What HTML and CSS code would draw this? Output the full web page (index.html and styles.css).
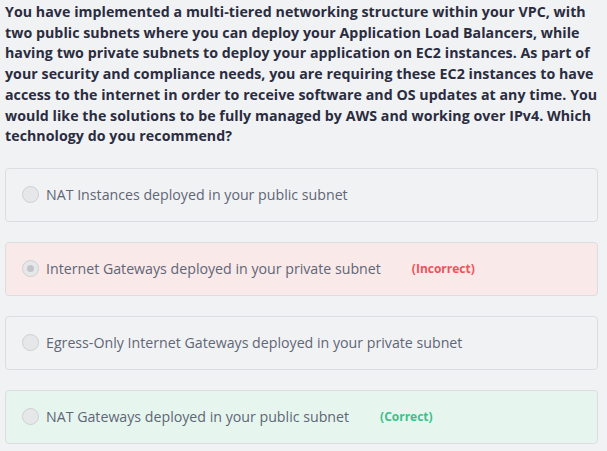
FILE: index.html
```html
<!DOCTYPE html>
<html lang="en">
<head>
<meta charset="utf-8">
<link rel="stylesheet" href="styles.css">
</head>
<body>
<div class="quiz">
  <p class="question">You have implemented a multi-tiered networking structure within your VPC, with two public subnets where you can deploy your Application Load Balancers, while having two private subnets to deploy your application on EC2 instances. As part of your security and compliance needs, you are requiring these EC2 instances to have access to the internet in order to receive software and OS updates at any time. You would like the solutions to be fully managed by AWS and working over IPv4. Which technology do you recommend?</p>
  <div class="options">
    <label class="option">
      <span class="radio"></span>
      <span class="text">NAT Instances deployed in your public subnet</span>
    </label>
    <label class="option incorrect">
      <span class="radio checked"></span>
      <span class="text">Internet Gateways deployed in your private subnet</span>
      <span class="verdict bad">(Incorrect)</span>
    </label>
    <label class="option">
      <span class="radio"></span>
      <span class="text">Egress-Only Internet Gateways deployed in your private subnet</span>
    </label>
    <label class="option correct">
      <span class="radio"></span>
      <span class="text">NAT Gateways deployed in your public subnet</span>
      <span class="verdict good">(Correct)</span>
    </label>
  </div>
</div>
</body>
</html>
```

FILE: styles.css
```css
html, body {
  margin: 0;
  padding: 0;
  background: #f1f2f4;
}
body {
  font-family: "Open Sans", "Noto Sans", sans-serif;
}
.quiz {
  padding: 0 0 0 5px;
}
.question {
  margin: 0;
  padding-top: 2px;
  font-size: 14.2px;
  letter-spacing: 0.05px;
  line-height: 20.7px;
  font-weight: 700;
  color: #2a2c40;
}
.options {
  display: flex;
  flex-direction: column;
  gap: 20px;
  margin: 21px 9px 0 0;
}
.option {
  display: flex;
  align-items: center;
  height: 54px;
  box-sizing: border-box;
  padding-left: 16px;
  border: 1px solid #dcdde0;
  border-radius: 4px;
  background: #f1f2f4;
  font-size: 14.2px;
  color: #5f6676;
}
.option.incorrect {
  background: #f9e9e9;
}
.option.correct {
  background: #e6f6ee;
}
.radio {
  width: 17px;
  height: 17px;
  box-sizing: border-box;
  border: 1px solid #cfd0d3;
  border-radius: 50%;
  background: #e6e7e9;
  margin-right: 7px;
  display: flex;
  align-items: center;
  justify-content: center;
  flex: none;
}
.radio.checked::after {
  content: "";
  width: 7px;
  height: 7px;
  border-radius: 50%;
  background: #c4c5c8;
}
.verdict {
  margin-left: 31px;
  font-size: 12px;
  font-weight: 700;
}
.verdict.bad {
  color: #f0525a;
}
.verdict.good {
  color: #3cc08c;
}
```
